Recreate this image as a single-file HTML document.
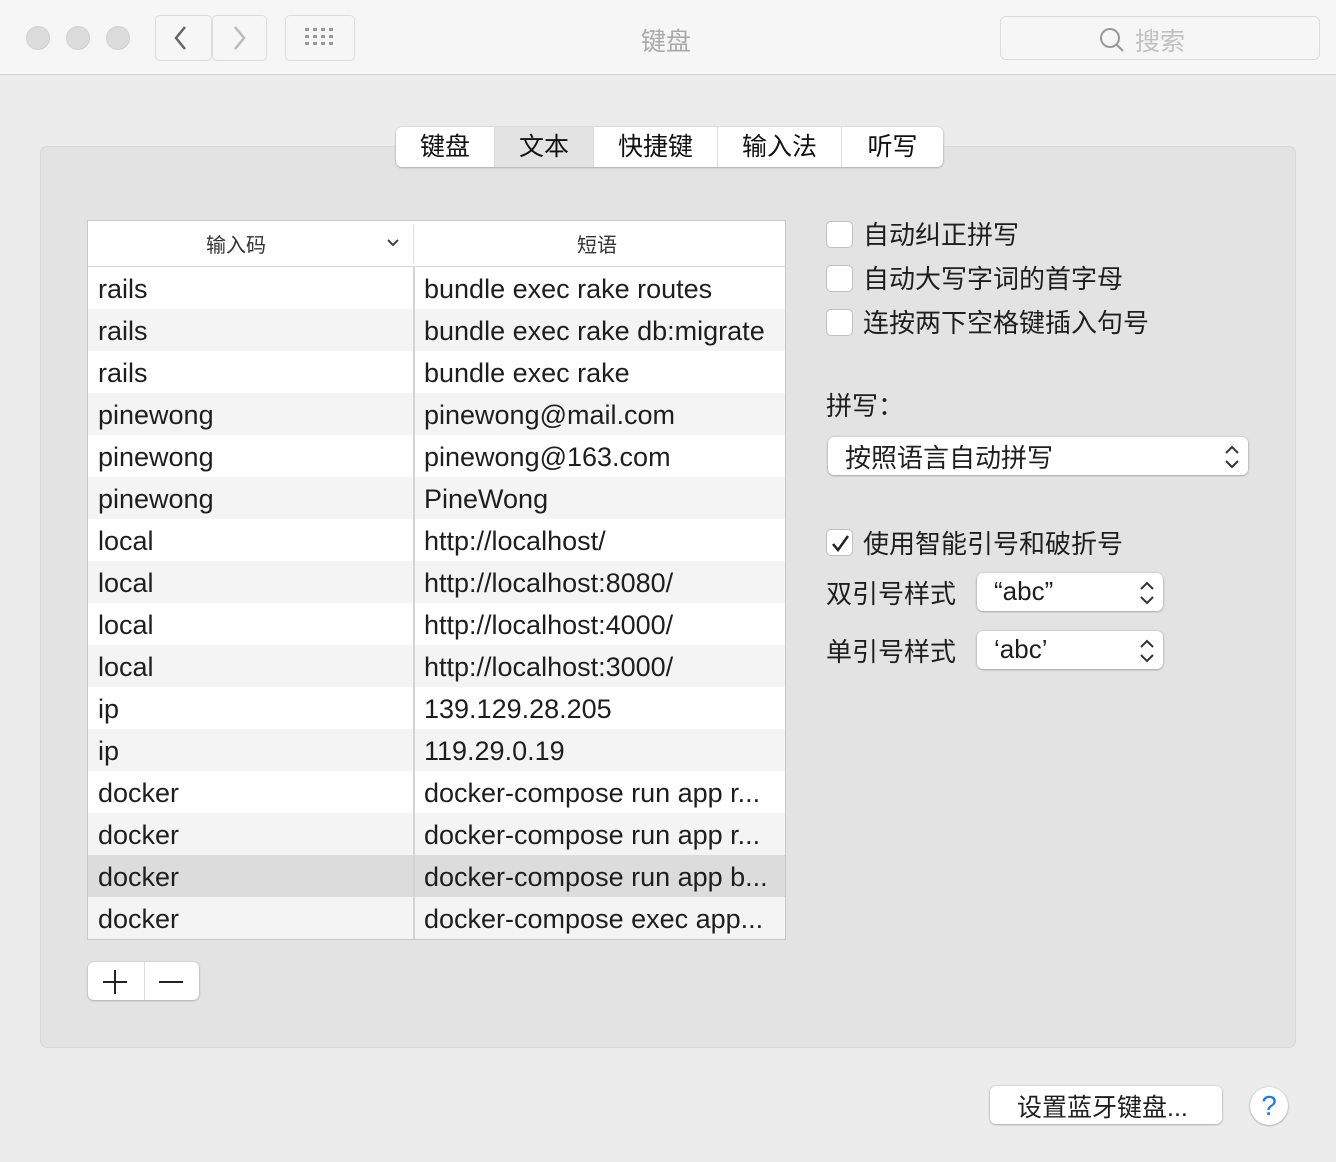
<!DOCTYPE html>
<html><head><meta charset="utf-8">
<style>
*{margin:0;padding:0;box-sizing:border-box}
body{width:1336px;height:1162px;background:#ececec;font-family:"Liberation Sans","Noto Sans CJK SC",sans-serif;color:#1e1e1e;position:relative;overflow:hidden}
.a{position:absolute}
.tb{left:0;top:0;width:1336px;height:75px;background:#f6f6f6;border-bottom:1px solid #d2d2d2}
.dot{width:24px;height:24px;border-radius:50%;background:#dcdcdc;border:1px solid #d0d0d0;top:26px}
.btn{border:1px solid #dcdcdc;border-radius:5px;background:#f6f6f6}
.grp{left:40px;top:146px;width:1256px;height:902px;background:#e3e3e3;border:1px solid #d8d8d8;border-radius:7px}
.tabs{left:396px;top:127px;width:547px;height:40px;background:#fff;border-radius:6px;box-shadow:0 0.5px 2px rgba(0,0,0,.35);display:flex;overflow:hidden}
.tabs div{height:40px;line-height:40px;text-align:center;font-size:25px;color:#111;border-right:1px solid #dcdcdc}
.tabs div:last-child{border-right:none}
.tbl{left:87px;top:220px;width:699px;height:720px;border:1px solid #c8c8c8;background:#fff;overflow:hidden}
.hd{height:46px;border-bottom:1px solid #d6d6d6;position:relative;background:#fff;font-size:20px;color:#333}
.row{height:42px;position:relative;font-size:27px;line-height:42px}
.row span{position:absolute;top:1px}
.c1{left:10px}.c2{left:336px}
.vl{left:325px;top:46px;width:2px;height:672px;background:#d4d4d4}
.cb{width:27px;height:27px;background:#fff;border:1px solid #c0c0c0;border-radius:5px;left:826px}
.lbl{font-size:26px;color:#1e1e1e;white-space:nowrap}
.pop{background:#fff;border-radius:6px;box-shadow:0 0.5px 2px rgba(0,0,0,.4);font-size:26px}
</style></head><body>
<div class="a tb"></div>
<div class="a dot" style="left:26px"></div>
<div class="a dot" style="left:66px"></div>
<div class="a dot" style="left:106px"></div>
<div class="a btn" style="left:155px;top:15px;width:57px;height:46px"></div>
<div class="a btn" style="left:212px;top:15px;width:55px;height:46px"></div>
<svg class="a" style="left:170px;top:24px" width="24" height="28"><path d="M15 3 L6 14 L15 25" stroke="#666" stroke-width="2.5" fill="none"/></svg>
<svg class="a" style="left:228px;top:24px" width="24" height="28"><path d="M7 3 L16 14 L7 25" stroke="#bbb" stroke-width="2.5" fill="none"/></svg>
<div class="a btn" style="left:285px;top:15px;width:70px;height:46px"></div>
<svg class="a" style="left:305px;top:28px" width="30" height="20"><g fill="#999"><rect x="0" y="0" width="4" height="3"/><rect x="8" y="0" width="4" height="3"/><rect x="16" y="0" width="4" height="3"/><rect x="24" y="0" width="4" height="3"/><rect x="0" y="7" width="4" height="3"/><rect x="8" y="7" width="4" height="3"/><rect x="16" y="7" width="4" height="3"/><rect x="24" y="7" width="4" height="3"/><rect x="0" y="14" width="4" height="3"/><rect x="8" y="14" width="4" height="3"/><rect x="16" y="14" width="4" height="3"/><rect x="24" y="14" width="4" height="3"/></g></svg>
<div class="a" style="left:641px;top:22px;font-size:25px;color:#aaa">键盘</div>
<div class="a btn" style="left:1000px;top:16px;width:320px;height:44px;border-radius:6px"></div>
<svg class="a" style="left:1098px;top:26px" width="28" height="28"><circle cx="12" cy="12" r="9" stroke="#999" stroke-width="2" fill="none"/><path d="M18.5 18.5 L25 25" stroke="#999" stroke-width="2.2"/></svg>
<div class="a" style="left:1135px;top:22px;font-size:25px;color:#c0c0c0">搜索</div>

<div class="a grp"></div>
<div class="a tabs">
<div style="width:99px">键盘</div>
<div style="width:99px;background:#e3e3e3">文本</div>
<div style="width:124px">快捷键</div>
<div style="width:124px">输入法</div>
<div style="width:101px">听写</div>
</div>

<div class="a tbl">
<div class="hd"><span class="a" style="left:118px;top:8px">输入码</span>
<svg class="a" style="left:298px;top:16px" width="14" height="12"><path d="M2 3 L7 8 L12 3" stroke="#444" stroke-width="2" fill="none"/></svg>
<div class="a" style="left:325px;top:4px;width:1px;height:38px;background:#ddd"></div>
<span class="a" style="left:489px;top:8px">短语</span></div>
<div class="row" style="background:#fff"><span class="c1">rails</span><span class="c2">bundle exec rake routes</span></div>
<div class="row" style="background:#f4f4f4"><span class="c1">rails</span><span class="c2">bundle exec rake db:migrate</span></div>
<div class="row" style="background:#fff"><span class="c1">rails</span><span class="c2">bundle exec rake</span></div>
<div class="row" style="background:#f4f4f4"><span class="c1">pinewong</span><span class="c2">pinewong@mail.com</span></div>
<div class="row" style="background:#fff"><span class="c1">pinewong</span><span class="c2">pinewong@163.com</span></div>
<div class="row" style="background:#f4f4f4"><span class="c1">pinewong</span><span class="c2">PineWong</span></div>
<div class="row" style="background:#fff"><span class="c1">local</span><span class="c2">http://localhost/</span></div>
<div class="row" style="background:#f4f4f4"><span class="c1">local</span><span class="c2">http://localhost:8080/</span></div>
<div class="row" style="background:#fff"><span class="c1">local</span><span class="c2">http://localhost:4000/</span></div>
<div class="row" style="background:#f4f4f4"><span class="c1">local</span><span class="c2">http://localhost:3000/</span></div>
<div class="row" style="background:#fff"><span class="c1">ip</span><span class="c2">139.129.28.205</span></div>
<div class="row" style="background:#f4f4f4"><span class="c1">ip</span><span class="c2">119.29.0.19</span></div>
<div class="row" style="background:#fff"><span class="c1">docker</span><span class="c2">docker-compose run app r...</span></div>
<div class="row" style="background:#f4f4f4"><span class="c1">docker</span><span class="c2">docker-compose run app r...</span></div>
<div class="row" style="background:#dcdcdc"><span class="c1">docker</span><span class="c2">docker-compose run app b...</span></div>
<div class="row" style="background:#f4f4f4"><span class="c1">docker</span><span class="c2">docker-compose exec app...</span></div>
<div class="a vl"></div>
</div>

<div class="a" style="left:88px;top:962px;width:111px;height:38px;background:#fff;border-radius:6px;box-shadow:0 0.5px 2px rgba(0,0,0,.35)"></div>
<div class="a" style="left:144px;top:962px;width:1px;height:38px;background:#ddd"></div>
<svg class="a" style="left:102px;top:969px" width="26" height="26"><path d="M13 1 V25 M1 13 H25" stroke="#222" stroke-width="2"/></svg>
<svg class="a" style="left:158px;top:969px" width="26" height="26"><path d="M1 13 H25" stroke="#222" stroke-width="2"/></svg>

<div class="a cb" style="top:221px"></div>
<div class="a lbl" style="left:863px;top:215px">自动纠正拼写</div>
<div class="a cb" style="top:265px"></div>
<div class="a lbl" style="left:863px;top:259px">自动大写字词的首字母</div>
<div class="a cb" style="top:309px"></div>
<div class="a lbl" style="left:863px;top:303px">连按两下空格键插入句号</div>
<div class="a lbl" style="left:826px;top:386px">拼写：</div>
<div class="a pop" style="left:828px;top:437px;width:420px;height:38px"><span class="a" style="left:17px;top:1px">按照语言自动拼写</span>
<svg class="a" style="left:394px;top:6px" width="20" height="28"><path d="M4 10 L10 4 L16 10 M4 18 L10 24 L16 18" stroke="#333" stroke-width="2" fill="none"/></svg></div>
<div class="a cb" style="top:529px"></div>
<svg class="a" style="left:830px;top:533px" width="22" height="22"><path d="M3 11 L8 17 L18 3" stroke="#222" stroke-width="2.5" fill="none"/></svg>
<div class="a lbl" style="left:863px;top:524px">使用智能引号和破折号</div>
<div class="a lbl" style="left:826px;top:574px">双引号样式</div>
<div class="a pop" style="left:977px;top:573px;width:186px;height:38px"><span class="a" style="left:17px;top:3px">“abc”</span>
<svg class="a" style="left:160px;top:6px" width="20" height="28"><path d="M4 10 L10 4 L16 10 M4 18 L10 24 L16 18" stroke="#333" stroke-width="2" fill="none"/></svg></div>
<div class="a lbl" style="left:826px;top:632px">单引号样式</div>
<div class="a pop" style="left:977px;top:631px;width:186px;height:38px"><span class="a" style="left:17px;top:3px">‘abc’</span>
<svg class="a" style="left:160px;top:6px" width="20" height="28"><path d="M4 10 L10 4 L16 10 M4 18 L10 24 L16 18" stroke="#333" stroke-width="2" fill="none"/></svg></div>

<div class="a pop" style="left:990px;top:1086px;width:232px;height:38px;font-size:25px"><span class="a" style="left:27px;top:2px">设置蓝牙键盘...</span></div>
<div class="a" style="left:1250px;top:1087px;width:38px;height:38px;border-radius:50%;background:#fff;box-shadow:0 0.5px 2px rgba(0,0,0,.4);color:#1a7cf5;font-size:28px;text-align:center;line-height:38px">?</div>
</body></html>
